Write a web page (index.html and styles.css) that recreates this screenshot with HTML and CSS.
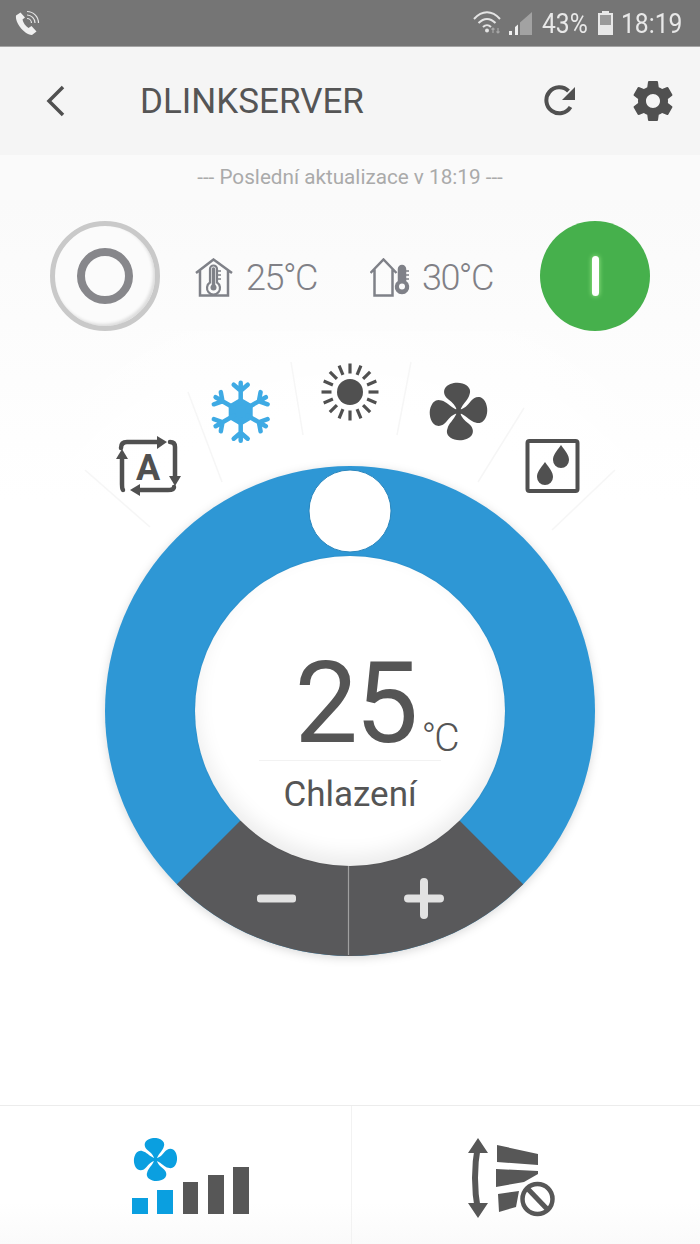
FILE: index.html
```html
<!DOCTYPE html>
<html lang="cs">
<head>
    <meta charset="UTF-8">
    <title>DLINKSERVER</title>
    <link rel="stylesheet" href="styles.css">
</head>
<body>
<div id="app">
    <div class="statusBar">
        <svg class="callIcon" width="28" height="28" viewBox="0 0 28 28">
            <path d="M7.500 3.500 L3 6.500 C2 13 10 25 19 26 L23.500 22.500 L18.500 17 L15.500 19 C12.500 17 10 13.500 9.500 10.500 L12 8.500 Z" fill="#f0f0f0"/>
            <path d="M14 6 A8 8 0 0 1 22 14 M14 2.500 A11.500 11.500 0 0 1 25.500 14 M14 9.500 A4.500 4.500 0 0 1 18.500 14" fill="none" stroke="#e6e6e6" stroke-width="1.200"/>
        </svg>
        <div class="statusRight">
            <svg width="34" height="30" viewBox="0 0 34 30">
                <path d="M2 11 C10 2 20 2 28 11 M6.500 15 C12 9.500 18 9.500 23.500 15 M11 19 C13.500 16.500 16.500 16.500 19 19" fill="none" stroke="#e4e4e4" stroke-width="2"/>
                <circle cx="15" cy="22.500" r="2" fill="#e4e4e4"/>
                <path d="M21 25 L21 20 M19.500 21.500 L21 20 L22.500 21.500 M26 20 L26 25 M24.500 23.500 L26 25 L27.500 23.500" fill="none" stroke="#a8a8a8" stroke-width="1.200"/>
            </svg>
            <svg class="signalIcon" width="24" height="26" viewBox="0 0 24 26">
                <path d="M0 21 L3 21 L3 25 L0 25 Z M6 17 L9 14.500 L9 25 L6 25 Z" fill="#f0f0f0"/>
                <path d="M11 12.500 L23 2 L23 25 L11 25 Z" fill="#a2a2a2"/>
            </svg>
            <span class="statusText percent">43%</span>
            <svg class="batteryIcon" width="17" height="24" viewBox="0 0 17 24">
                <path d="M5 0 H12 V2 H16 V24 H1 V2 H5 Z" fill="#e8e8e8"/>
                <rect x="3" y="4" width="11" height="10" fill="#9a9a9a"/>
            </svg>
            <span class="statusText time">18:19</span>
        </div>
    </div>

    <div class="header">
        <svg class="backIcon" width="20" height="32" viewBox="0 0 20 32">
            <path d="M17 2 L3 16 L17 30" fill="none" stroke="#505050" stroke-width="3.500"/>
        </svg>
        <h1 class="title">DLINKSERVER</h1>
        <svg class="refreshIcon" width="34" height="34" viewBox="0 0 34 34">
            <path d="M26.500 23 A13 13 0 1 1 24.500 7" fill="none" stroke="#505050" stroke-width="4"/>
            <path d="M31 3 L31 16 L18 16 Z" fill="#505050"/>
        </svg>
        <svg class="gearIcon" width="48" height="48" viewBox="0 0 24 24">
            <path fill="#505050" d="M19.430 12.980c.04-.32.07-.64.07-.98s-.03-.66-.07-.98l2.110-1.650c.19-.15.24-.42.12-.64l-2-3.460c-.12-.22-.39-.3-.61-.22l-2.490 1c-.52-.4-1.080-.73-1.690-.98l-.38-2.650C14.460 2.180 14.250 2 14 2h-4c-.25 0-.46.18-.49.42l-.38 2.650c-.61.25-1.170.59-1.690.98l-2.490-1c-.23-.09-.49 0-.61.22l-2 3.460c-.13.22-.07.49.12.64l2.110 1.650c-.04.32-.07.65-.07.98s.03.66.07.98l-2.110 1.650c-.19.15-.24.42-.12.64l2 3.460c.12.22.39.3.61.22l2.490-1c.52.4 1.080.73 1.690.98l.38 2.650c.03.24.24.42.49.42h4c.25 0 .46-.18.49-.42l.38-2.650c.61-.25 1.170-.59 1.690-.98l2.490 1c.23.09.49 0 .61-.22l2-3.460c.12-.22.07-.49-.12-.64l-2.110-1.650zM12 15.500c-1.930 0-3.500-1.570-3.500-3.500s1.570-3.500 3.500-3.500 3.500 1.570 3.500 3.500-1.570 3.500-3.500 3.500z"/>
        </svg>
    </div>

    <p class="updated">--- Poslední aktualizace v 18:19 ---</p>

    <div class="stats">
        <button class="powerBtn powerOff"><span class="offRing"></span></button>
        <div class="tempBox tempIn">
            <svg width="38" height="40" viewBox="0 0 38 40">
                <path d="M1 15 L18.500 1.500 L37 15 M5 12 V37.500 H33 V12" fill="none" stroke="#7f8188" stroke-width="2.500"/>
                <path d="M15 11 A3.500 3.500 0 0 1 22 11 V24.500 A6.500 6.500 0 1 1 15 24.500 Z" fill="#fafafa" stroke="#7f8188" stroke-width="2.200"/>
                <path d="M18.500 11 V27" stroke="#7f8188" stroke-width="3.500" stroke-linecap="round"/>
                <circle cx="18.500" cy="29.500" r="3" fill="#7f8188"/>
                <path d="M23 13 H26 M23 17 H26 M23 21 H26" stroke="#7f8188" stroke-width="1.500"/>
            </svg>
            <span class="tempText">25°C</span>
        </div>
        <div class="tempBox tempOut">
            <svg width="40" height="40" viewBox="0 0 40 40">
                <path d="M0.500 15 L13.500 1.500 L26.500 15 M4.500 11.500 V37.500 H22.500 V11.500" fill="none" stroke="#7f8188" stroke-width="2.500"/>
                <path d="M28.500 11 A3.500 3.500 0 0 1 35.500 11 V23.500 A6.500 6.500 0 1 1 28.500 23.500 Z" fill="#7f8188" stroke="#7f8188" stroke-width="1.500"/>
                <circle cx="32" cy="28.500" r="3" fill="#fafafa"/>
                <path d="M36 13 H39 M36 17 H39 M36 21 H39" stroke="#7f8188" stroke-width="1.500"/>
            </svg>
            <span class="tempText">30°C</span>
        </div>
        <button class="powerBtn powerOn"><span class="onBar"></span></button>
    </div>

    <div class="dialArea">
        <svg class="dialSvg" width="700" height="774" viewBox="0 331 700 774">
            <defs>
                <g id="fanShape">
                    <path id="fanBlade" d="M-1.500 -1 C-3 -6 -6 -9 -10 -12 C-14 -15 -16 -20 -13 -24 C-10 -28 -2 -30 4 -28 C10 -26 13 -22 11 -17 C10 -12 5 -9 1.500 -1 Z"/>
                    <use href="#fanBlade" transform="rotate(90)"/>
                    <use href="#fanBlade" transform="rotate(180)"/>
                    <use href="#fanBlade" transform="rotate(270)"/>
                    <circle r="3"/>
                </g>
                <g id="flakeArm">
                    <path d="M0 -8 V-29 M-7 -27 L0 -21 L7 -27" fill="none" stroke="#3eaae4" stroke-width="4.500" stroke-linecap="round"/>
                </g>
                <path id="sunRay" d="M0 -18.500 V-28.500" stroke="#505050" stroke-width="3.200"/>
            </defs>

            <!-- lines between the modes -->
            <g class="rays">
                <path d="M85 470 L150 527"/>
                <path d="M188 392 L222 482"/>
                <path d="M291 362 L303 435"/>
                <path d="M411 362 L397 435"/>
                <path d="M524 408 L478 482"/>
                <path d="M615 470 L552 530"/>
            </g>

            <!-- mode icons -->
            <g>
                <path d="M121 448 Q121 442 127 442 H160" fill="none" stroke="#505050" stroke-width="4.500" stroke-linecap="round"/>
                <path d="M157 436 L167 442 L157 449 Z" fill="#505050"/>
                <path d="M170 442 Q175 442 175 447 V478" fill="none" stroke="#505050" stroke-width="4.500" stroke-linecap="round"/>
                <path d="M169 476 L181 476 L175 486 Z" fill="#505050"/>
                <path d="M174 487 Q174 490 168 490 H136" fill="none" stroke="#505050" stroke-width="4.500" stroke-linecap="round"/>
                <path d="M140 484 L130 490 L140 496 Z" fill="#505050"/>
                <path d="M123 490 Q122 490 122 484 V456" fill="none" stroke="#505050" stroke-width="4.500" stroke-linecap="round"/>
                <path d="M116 459 L122 449 L128 459 Z" fill="#505050"/>
                <text class="autoLetter" x="148" y="480" text-anchor="middle">A</text>
            </g>
            <g transform="translate(240.700 411.700)">
                <path d="M0 -14 L12 -7 L12 7 L0 14 L-12 7 L-12 -7 Z" fill="#3eaae4"/>
                <use href="#flakeArm"/>
                <use href="#flakeArm" transform="rotate(60)"/>
                <use href="#flakeArm" transform="rotate(120)"/>
                <use href="#flakeArm" transform="rotate(180)"/>
                <use href="#flakeArm" transform="rotate(240)"/>
                <use href="#flakeArm" transform="rotate(300)"/>
            </g>
            <g transform="translate(350 392)">
                <circle r="13" fill="#505050"/>
                <use href="#sunRay"/>
                <use href="#sunRay" transform="rotate(22.500)"/>
                <use href="#sunRay" transform="rotate(45)"/>
                <use href="#sunRay" transform="rotate(67.500)"/>
                <use href="#sunRay" transform="rotate(90)"/>
                <use href="#sunRay" transform="rotate(112.500)"/>
                <use href="#sunRay" transform="rotate(135)"/>
                <use href="#sunRay" transform="rotate(157.500)"/>
                <use href="#sunRay" transform="rotate(180)"/>
                <use href="#sunRay" transform="rotate(202.500)"/>
                <use href="#sunRay" transform="rotate(225)"/>
                <use href="#sunRay" transform="rotate(247.500)"/>
                <use href="#sunRay" transform="rotate(270)"/>
                <use href="#sunRay" transform="rotate(292.500)"/>
                <use href="#sunRay" transform="rotate(315)"/>
                <use href="#sunRay" transform="rotate(337.500)"/>
            </g>
            <use href="#fanShape" transform="translate(458.500 411.500)" fill="#505050"/>
            <g>
                <rect x="527.500" y="441" width="50" height="50" rx="2" fill="none" stroke="#505050" stroke-width="4"/>
                <path d="M561 445 C566 452 569 455 569 460 A8 8 0 0 1 553 460 C553 455 556 452 561 445 Z" fill="#505050"/>
                <path d="M545 462 C550 469 553 472 553 477 A8 8 0 0 1 537 477 C537 472 540 469 545 462 Z" fill="#505050"/>
            </g>

            <!-- dial ring -->
            <g class="ringShadow">
                <circle cx="350" cy="711" r="245" fill="#2e97d5"/>
                <path d="M350 711 L176.800 884.200 A245 245 0 0 0 523.200 884.200 Z" fill="#59595b"/>
            </g>
            <circle class="knob" cx="350" cy="511" r="41"/>
            <path d="M348.500 860 V955" stroke="#a0a0a0" stroke-width="1.200"/>
            <rect x="257" y="894.500" width="39" height="8" rx="3" fill="#e2e2e2"/>
            <path d="M408 898.500 H440 M424 882 V915" stroke="#e2e2e2" stroke-width="8" stroke-linecap="round"/>
        </svg>

        <div class="dialFace">
            <div class="setTemp">
                <span class="setValue">25</span><span class="setUnit">°C</span>
            </div>
            <div class="setLine"></div>
            <div class="setMode">Chlazení</div>
        </div>
    </div>

    <div class="bottomBar">
        <div class="bottomCell fanCell">
            <svg width="120" height="80" viewBox="0 0 120 80">
                <use href="#fanShape" transform="translate(25.500 21.500) scale(.75)" fill="#0a9fe0"/>
                <rect x="2" y="60" width="16" height="16" fill="#0a9fe0"/>
                <rect x="27" y="52" width="16" height="24" fill="#0a9fe0"/>
                <rect x="53" y="44" width="15" height="32" fill="#575757"/>
                <rect x="78" y="37" width="16" height="39" fill="#575757"/>
                <rect x="103" y="29" width="16" height="47" fill="#575757"/>
            </svg>
        </div>
        <div class="bottomCell swingCell">
            <svg width="90" height="82" viewBox="0 0 90 82">
                <path d="M11 8 Q5 41 11 74" fill="none" stroke="#575757" stroke-width="6"/>
                <path d="M1 16 L11 1 L21 16 Z M1 66 L21 66 L11 81 Z" fill="#575757"/>
                <path d="M30 8 L71 17 V28 L30 25 Z M29 32 L71 34 V37 L57 45 L29 50 Z M31 57 L52 54 L49 70 L32 75 Z" fill="#575757"/>
                <circle cx="70.500" cy="62" r="15" fill="#fff" stroke="#575757" stroke-width="4.500"/>
                <path d="M60 51 L81 73" stroke="#575757" stroke-width="5"/>
            </svg>
        </div>
    </div>
</div>
</body>
</html>
```

FILE: styles.css
```css
* {
    box-sizing: border-box;
}

body {
    font-family: 'Roboto', 'Liberation Sans', sans-serif;
    margin: 0;
    padding: 0;
    background-color: #fff;
}

#app {
    width: 700px;
    height: 1244px;
    overflow: hidden;
    display: flex;
    flex-direction: column;
    background: linear-gradient(#fafafa 0, #fafafa 200px, #fff 500px);
}

.statusBar {
    height: 47px;
    background-color: #757575;
    border-bottom: 1px solid #a5a5a5;
    display: flex;
    justify-content: space-between;
    align-items: center;
    padding: 0 15px 0 13px;
    flex-shrink: 0;
}

.statusRight {
    display: flex;
    align-items: center;
}

.signalIcon {
    margin-left: 3px;
}

.statusText {
    color: #e8e8e8;
    font-size: 28px;
    display: inline-block;
    transform: scaleX(.88);
    transform-origin: left center;
}

.percent {
    margin-left: 9px;
    width: 55px;
}

.time {
    margin-left: 7px;
    width: 64px;
}

.header {
    height: 108px;
    background-color: #f5f5f5;
    display: flex;
    align-items: center;
    padding: 0 23px 0 46px;
    flex-shrink: 0;
}

.title {
    margin: 0 0 0 74px;
    flex: 1;
    font-size: 35px;
    font-weight: 400;
    color: #555;
    white-space: nowrap;
}

.refreshIcon {
    margin-right: 51px;
}

.updated {
    margin: 10px 0 0;
    height: 24px;
    line-height: 24px;
    text-align: center;
    font-size: 20.700px;
    color: #aaa;
    flex-shrink: 0;
}

.stats {
    margin-top: 32px;
    height: 110px;
    padding: 0 50px;
    display: flex;
    align-items: center;
    flex-shrink: 0;
}

.powerBtn {
    width: 110px;
    height: 110px;
    border: none;
    border-radius: 50%;
    padding: 0;
    display: flex;
    align-items: center;
    justify-content: center;
    flex-shrink: 0;
}

.powerOff {
    background-color: #fbfbfb;
    border: 5px solid #c9c9c9;
    box-shadow: inset -2px -2px 3px #ddd;
}

.offRing {
    width: 56px;
    height: 56px;
    border: 8px solid #87878b;
    border-radius: 50%;
}

.powerOn {
    background-color: #46b04c;
}

.onBar {
    width: 7px;
    height: 40px;
    border-radius: 4px;
    background-color: #fff;
    box-shadow: 0 0 5px #a5ef90;
}

.tempBox {
    display: flex;
    align-items: center;
    gap: 13px;
    color: #808086;
    padding-top: 4px;
}

.tempIn {
    margin-left: 35px;
}

.tempOut {
    margin-left: 53px;
    gap: 12px;
}

.tempOut + .powerBtn {
    margin-left: auto;
}

.tempText {
    font-size: 36px;
    font-weight: 300;
    letter-spacing: -1.500px;
}

.dialArea {
    position: relative;
    height: 774px;
    flex-shrink: 0;
    background: radial-gradient(circle at 350px 380px, #fff 300px, rgba(255, 255, 255, 0) 450px);
}

.dialSvg {
    display: block;
}

.rays path {
    stroke: #f6f6f6;
    stroke-width: 1.500;
    fill: none;
}

.autoLetter {
    font-family: 'Roboto', 'Liberation Sans', sans-serif;
    font-size: 36px;
    font-weight: 700;
    fill: #505050;
}

.ringShadow {
    filter: drop-shadow(0 2px 5px rgba(0, 0, 0, .15));
}

.knob {
    fill: #fff;
    stroke: #2a86bd;
    stroke-width: 1;
}

.dialFace {
    position: absolute;
    left: 195px;
    top: 225px;
    width: 310px;
    height: 310px;
    border-radius: 50%;
    background-color: #fff;
    box-shadow: inset 0 -10px 20px rgba(0, 0, 0, .08), 0 0 2px rgba(0, 0, 0, .1);
    display: flex;
    flex-direction: column;
    align-items: center;
    color: #555;
}

.setTemp {
    margin-top: 76px;
    margin-left: 52px;
    height: 128px;
    display: flex;
    align-items: flex-end;
}

.setValue {
    font-size: 113px;
    line-height: 112px;
    letter-spacing: -3px;
}

.setUnit {
    font-size: 39px;
    font-weight: 300;
    line-height: 44px;
    margin-left: 6px;
    letter-spacing: -2px;
}

.setLine {
    width: 182px;
    height: 1px;
    background-color: #f2f2f2;
}

.setMode {
    margin-top: 10px;
    font-size: 35px;
    line-height: 48px;
}

.bottomBar {
    height: 139px;
    border-top: 1px solid #ececec;
    display: grid;
    grid-template-columns: 351px 349px;
    flex-shrink: 0;
    background: linear-gradient(#fff 70%, #fafafa);
}

.bottomCell {
    display: flex;
    align-items: center;
    justify-content: center;
    padding-top: 6px;
}

.fanCell {
    padding-left: 28px;
}

.swingCell {
    padding-right: 28px;
    border-left: 1px solid #f2f2f2;
}
```
